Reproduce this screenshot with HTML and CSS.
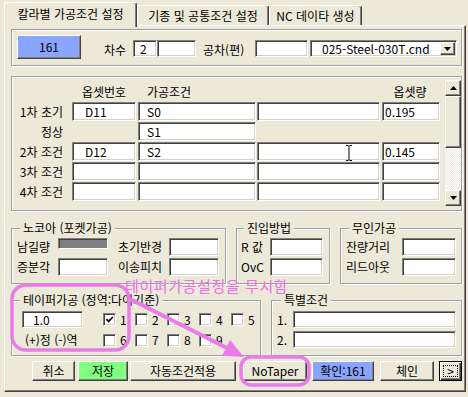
FILE: index.html
```html
<!DOCTYPE html>
<html lang="ko">
<head>
<meta charset="utf-8">
<title>가공조건</title>
<link rel="stylesheet" href="styles.css">
</head>
<body>
<div class="dialog">
  <div class="tabs">
    <div class="tab active t1">칼라별 가공조건 설정</div>
    <div class="tab t2">기종 및 공통조건 설정</div>
    <div class="tab t3">NC 데이타 생성</div>
  </div>
  <div class="panel">
    <div class="grp g1">
      <div class="btn btn161">161</div>
      <div class="lbl la">차수</div>
      <div class="fld fa">2</div>
      <div class="fld fb"></div>
      <div class="lbl lb">공차(편)</div>
      <div class="fld fc"></div>
      <div class="fld combo">
        <span>025-Steel-030T.cnd</span>
        <div class="btn dd"><svg width="7" height="4" viewBox="0 0 7 4"><path d="M0 0h7L3.5 4z"/></svg></div>
      </div>
    </div>

    <div class="grp g2">
      <div class="grid">
        <div></div><div class="hd c">옵셋번호</div><div class="hd pl">가공조건</div><div></div><div class="hd c">옵셋량</div>

        <div class="rl">1차 초기</div><div class="fld r1">D11</div><div class="fld r2">S0</div><div class="fld r3"></div><div class="fld r4">0.195</div>
        <div class="rl">정상</div><div></div><div class="fld r2">S1</div><div></div><div></div>
        <div class="rl">2차 조건</div><div class="fld r1">D12</div><div class="fld r2">S2</div><div class="fld r3"></div><div class="fld r4">0.145</div>
        <div class="rl">3차 조건</div><div class="fld r1"></div><div class="fld r2"></div><div class="fld r3"></div><div class="fld r4"></div>
        <div class="rl">4차 조건</div><div class="fld r1"></div><div class="fld r2"></div><div class="fld r3"></div><div class="fld r4"></div>
      </div>
      <div class="sb">
        <div class="btn sbb"><svg width="7" height="4" viewBox="0 0 7 4"><path d="M3.5 0L7 4H0z"/></svg></div>
        <div class="btn thumb"></div>
        <div class="track"></div>
        <div class="btn sbb"><svg width="7" height="4" viewBox="0 0 7 4"><path d="M0 0h7L3.5 4z"/></svg></div>
      </div>
    </div>

    <div class="row3">
      <div class="grp nocoa">
        <span class="legend lg-n">노코아 (포켓가공)</span>
        <div class="gN">
          <div class="lbl">남길량</div><div class="fld grey"></div>
          <div class="lbl pl10">초기반경</div><div class="fld"></div>
          <div class="lbl">증분각</div><div class="fld"></div>
          <div class="lbl pl10">이송피치</div><div class="fld"></div>
        </div>
      </div>
      <div class="grp jin">
        <span class="legend lg-j">진입방법</span>
        <div class="gJ">
          <div class="lbl">R 값</div><div class="fld"></div>
          <div class="lbl">OvC</div><div class="fld"></div>
        </div>
      </div>
      <div class="grp muin">
        <span class="legend lg-m">무인가공</span>
        <div class="gM">
          <div class="lbl">잔량거리</div><div class="fld"></div>
          <div class="lbl">리드아웃</div><div class="fld"></div>
        </div>
      </div>
    </div>

    <div class="row4">
      <div class="grp taper">
        <span class="legend lg-t">테이퍼가공 (정역:다이기준)</span>
        <div class="gT">
          <div class="fld ft">1.0</div>
          <div class="cb"><span class="box"><svg width="9" height="9" viewBox="0 0 9 9"><path d="M1.5 4.2L3.6 6.4L7.8 2" fill="none" stroke="#000" stroke-width="1.8"/></svg></span><span>1</span></div>
          <div class="cb"><span class="box"></span><span>2</span></div>
          <div class="cb"><span class="box"></span><span>3</span></div>
          <div class="cb"><span class="box"></span><span>4</span></div>
          <div class="cb"><span class="box"></span><span>5</span></div>
          <div class="lbl sign">(+)정 (-)역</div>
          <div class="cb"><span class="box"></span><span>6</span></div>
          <div class="cb"><span class="box"></span><span>7</span></div>
          <div class="cb"><span class="box"></span><span>8</span></div>
          <div class="cb"><span class="box"></span><span>9</span></div>
        </div>
      </div>
      <div class="grp special">
        <span class="legend lg-s">특별조건</span>
        <div class="gS">
          <div class="lbl">1.</div><div class="fld"></div>
          <div class="lbl">2.</div><div class="fld"></div>
        </div>
      </div>
    </div>

    <div class="btns">
      <div class="btn b-cancel">취소</div>
      <div class="btn b-save">저장</div>
      <div class="btn b-auto">자동조건적용</div>
      <div class="btn b-notaper">NoTaper</div>
      <div class="btn b-ok">확인:161</div>
      <div class="btn b-chain">체인</div>
      <div class="btn b-next"><span class="focus">&gt;</span></div>
    </div>
  </div>

  <svg class="overlay" width="468" height="397" viewBox="0 0 468 397">
    <g fill="none" stroke="#E97CE6" stroke-width="3.5">
      <rect x="12" y="285" width="117" height="65" rx="14"/>
      <rect x="241" y="357" width="68" height="28" rx="10"/>
      <line x1="130" y1="299" x2="229" y2="349" stroke-width="4"/>
    </g>
    <polygon points="244,357 230,340 222,356" fill="#E97CE6"/>
    <path d="M346 145.5h2.5M349.5 145.5h2.5M349 146v14M346 160.5h2.5M349.5 160.5h2.5" stroke="#000" stroke-width="1" fill="none"/>
  </svg>
  <div class="note">테이퍼가공설정을 무시함</div>
</div>
</body>
</html>
```

FILE: styles.css
```css
* { box-sizing: border-box; margin: 0; padding: 0; }

body {
  margin: 0;
  background: #ECE9D8;
  font-family: "Noto Sans CJK KR", "Noto Sans", sans-serif;
  font-size: 12px;
  line-height: 14px;
  color: #000;
}

.dialog {
  position: relative;
  width: 468px;
  height: 397px;
  background: #ECE9D8;
  overflow: hidden;
}

/* tabs */
.tabs {
  display: flex;
  align-items: flex-end;
  height: 25px;
  padding-left: 4px;
  position: relative;
  z-index: 2;
}
.tab {
  height: 20px;
  padding-top: 3px;
  text-align: center;
  white-space: nowrap;
  background: #ECE9D8;
  border-top: 1px solid #fff;
  border-left: 1px solid #fff;
  border-right: 1px solid #404040;
  box-shadow: inset -1px 0 #808080;
  border-radius: 2px 3px 0 0;
}
.tab.active {
  height: 25px;
  margin-bottom: -2px;
  padding-top: 4px;
}
.t1 { width: 133px; }
.t2 { width: 132px; }
.t3 { width: 93px; }

/* panel */
.panel {
  position: relative;
  z-index: 1;
  margin-left: 4px;
  width: 462px;
  height: 367px;
  border: 1px solid;
  border-color: #fff #404040 #404040 #fff;
  box-shadow: inset -1px -1px #808080;
  padding: 3px 3px 0 6px;
}

/* controls */
.grp {
  position: relative;
  border: 1px solid #a0a0a0;
  box-shadow: inset 1px 1px #fff, 1px 1px #fff;
}
.legend {
  position: absolute;
  top: -8px;
  padding: 0 3px;
  background: #ECE9D8;
  line-height: 14px;
  white-space: nowrap;
}
.fld {
  background: #fff;
  border: 1px solid;
  border-color: #808080 #fff #fff #808080;
  box-shadow: inset 1px 1px #404040, inset -1px -1px #D4D0C8;
  white-space: nowrap;
  overflow: hidden;
  line-height: 16px;
}
.btn {
  background: #ECE9D8;
  border: 1px solid;
  border-color: #fff #404040 #404040 #fff;
  box-shadow: inset -1px -1px #808080;
  display: flex;
  align-items: center;
  justify-content: center;
  white-space: nowrap;
}
.lbl { white-space: nowrap; }

/* group 1 */
.g1 {
  height: 37px;
  display: flex;
  align-items: flex-start;
  padding: 5px 0 0 5px;
}
.btn161 {
  width: 64px;
  height: 24px;
  background: #8AA5FF;
}
.la {
  width: 52px;
  text-align: right;
  padding-right: 7px;
  margin-top: 6px;
  line-height: 17px;
}
.lb {
  width: 59px;
  padding-left: 7px;
  margin-top: 6px;
  line-height: 17px;
}
.fa { width: 24px; height: 17px; margin-top: 5px; padding-left: 6px; line-height: 15px; }
.fb { width: 39px; height: 17px; margin-top: 5px; }
.fc { width: 53px; height: 17px; margin-top: 5px; }
.combo {
  width: 147px;
  height: 17px;
  margin: 5px 0 0 2px;
  display: flex;
  align-items: center;
  justify-content: space-between;
  padding: 0 1px 0 11px;
  line-height: 15px;
}
.dd { width: 15px; height: 13px; }

/* group 2 */
.g2 {
  margin-top: 10px;
  height: 135px;
  display: flex;
  align-items: flex-start;
}
.grid {
  display: grid;
  grid-template-columns: 60px 64px 120px 124px 60px;
  grid-template-rows: 25px repeat(5, 20px);
}
.hd { align-self: end; padding-bottom: 3px; white-space: nowrap; }
.hd.c { text-align: center; }
.hd.pl { padding-left: 11px; }
.rl { text-align: right; padding-right: 9px; line-height: 19px; white-space: nowrap; }
.grid .fld { height: 19px; line-height: 17px; }
.r1 { padding-left: 12px; }
.r2 { margin-left: 2px; padding-left: 8px; }
.r3 { margin-left: 1px; }
.r4 { margin-left: 2px; padding-left: 2px; }

.sb {
  margin: 3px 0 0 5px;
  width: 16px;
  height: 126px;
  display: flex;
  flex-direction: column;
}
.sbb { height: 16px; flex: none; }
.thumb { height: 52px; flex: none; }
.track {
  flex: 1;
  background: repeating-conic-gradient(#fff 0 25%, #ECE9D8 0 50%) 0 0 / 2px 2px;
}

/* row 3 */
.row3 {
  display: flex;
  gap: 10px;
  margin-top: 17px;
  height: 56px;
}
.nocoa { width: 215px; padding: 9px 0 0 5px; }
.jin { width: 94px; padding: 9px 0 0 4px; }
.muin { width: 122px; padding: 9px 0 0 5px; }
.lg-n { left: 8px; }
.lg-j { left: 7px; }
.lg-m { left: 8px; }
.lg-t { left: 8px; }
.lg-s { left: 9px; }
.gN, .gJ, .gM {
  display: grid;
  grid-template-rows: 18px 18px;
  row-gap: 2px;
  align-items: center;
}
.gN { grid-template-columns: 41px 50px 61px 50px; }
.gJ { grid-template-columns: 29px 53px; }
.gM { grid-template-columns: 56px 54px; }
.gN .fld, .gJ .fld, .gM .fld { height: 18px; }
.gN .fld.grey { height: 11px; align-self: start; background: #808080; box-shadow: inset 1px 1px #404040; }
.pl10 { padding-left: 10px; }

/* row 4 */
.row4 {
  display: flex;
  gap: 10px;
  margin-top: 16px;
  height: 56px;
}
.taper { width: 250px; padding: 10px 0 0 10px; }
.special { width: 191px; padding: 10px 0 0 5px; }
.gT {
  display: grid;
  grid-template-columns: 81px 32px 32px 32px 32px 30px;
  grid-template-rows: 17px 14px;
  row-gap: 5px;
  align-items: center;
}
.ft { width: 61px; height: 17px; padding-left: 10px; line-height: 15px; }
.sign { padding-left: 3px; }
.cb { display: flex; align-items: center; gap: 4px; }
.box {
  width: 13px;
  height: 13px;
  flex: none;
  background: #fff;
  border: 1px solid;
  border-color: #808080 #fff #fff #808080;
  box-shadow: inset 1px 1px #404040, inset -1px -1px #D4D0C8;
  display: flex;
  align-items: center;
  justify-content: center;
}
.box svg { display: block; }
.gS {
  display: grid;
  grid-template-columns: 16px 163px;
  grid-template-rows: 17px 17px;
  row-gap: 3px;
  align-items: center;
}
.gS .fld { height: 17px; }

/* buttons */
.btns {
  display: flex;
  margin-top: 5px;
  height: 20px;
  padding-left: 21px;
}
.btns .btn { height: 20px; }
.b-cancel { width: 43px; }
.b-save { width: 50px; margin-left: 3px; background: #80FF80; }
.b-auto { width: 106px; margin-left: 2px; }
.b-notaper { width: 64px; margin-left: 7px; }
.b-ok { width: 62px; margin-left: 5px; background: #8AA5FF; }
.b-chain { width: 54px; margin-left: 6px; }
.b-next {
  width: 23px;
  margin-left: 5px;
  border: 1px solid #000;
  box-shadow: inset 1px 1px #fff, inset -1px -1px #404040, inset -2px -2px #808080;
  padding: 3px;
}
.focus {
  width: 100%;
  height: 100%;
  border: 1px dotted #000;
  display: flex;
  align-items: center;
  justify-content: center;
  line-height: 12px;
}

/* annotations */
.overlay {
  position: absolute;
  top: 0;
  left: 0;
  z-index: 5;
  pointer-events: none;
}
.note {
  position: absolute;
  left: 125px;
  top: 279px;
  z-index: 6;
  font-size: 15px;
  line-height: 13px;
  letter-spacing: 0.6px;
  color: #EE6EE6;
  white-space: nowrap;
}
```
